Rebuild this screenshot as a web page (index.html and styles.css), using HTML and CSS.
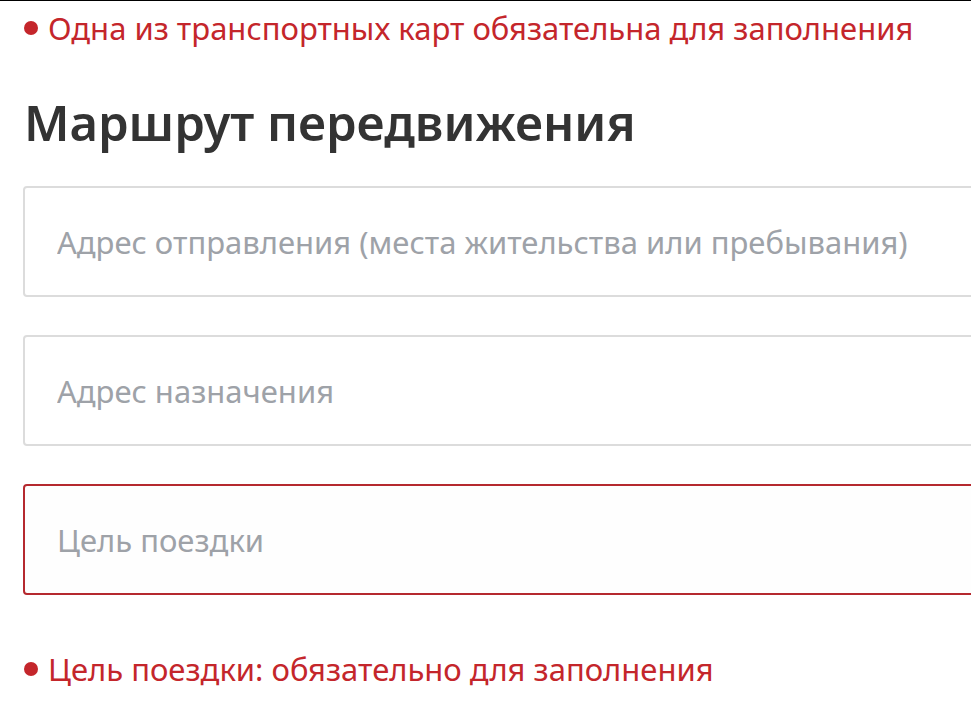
FILE: index.html
```html
<!DOCTYPE html>
<html lang="ru">
<head>
  <meta charset="UTF-8" />
  <meta name="viewport" content="width=device-width, initial-scale=1.0" />
  <title>Маршрут передвижения</title>
  <link rel="stylesheet" href="styles.css">
</head>
<body>
  <div class="page">
    <p class="error">Одна из транспортных карт обязательна для заполнения</p>

    <h2 class="title">Маршрут передвижения</h2>

    <div class="fields">
      <input class="field" type="text" placeholder="Адрес отправления (места жительства или пребывания)">
      <input class="field" type="text" placeholder="Адрес назначения">
      <input class="field invalid" type="text" placeholder="Цель поездки">
    </div>

    <p class="error">Цель поездки: обязательно для заполнения</p>
  </div>
</body>
</html>
```

FILE: styles.css
```css
* {
  margin: 0;
  padding: 0;
  box-sizing: border-box;
}

body {
  background: #fff;
  border-top: 1px solid #000;
  font-family: 'Noto Sans', sans-serif;
  overflow: hidden;
}

.page {
  padding: 7px 0 0 24px;
  overflow: hidden;
}

.error {
  display: flex;
  align-items: center;
  gap: 10px;
  color: #c4262b;
  font-size: 31px;
  line-height: 40px;
  white-space: nowrap;
}

.error::before {
  content: "";
  width: 14px;
  height: 14px;
  border-radius: 50%;
  background: #c4262b;
  flex-shrink: 0;
}

.title {
  margin-top: 44px;
  font-size: 49px;
  font-weight: 600;
  color: #333;
  line-height: 60px;
  white-space: nowrap;
}

.fields {
  margin-top: 34px;
  margin-left: -1px;
  margin-right: -60px;
  display: flex;
  flex-direction: column;
  gap: 38px;
}

.field {
  display: block;
  width: 100%;
  height: 111px;
  padding: 0 32px;
  border: 2px solid #dcdcdc;
  border-radius: 4px;
  background: #fff;
  font-family: inherit;
  font-size: 31px;
  color: #333;
  outline: none;
}

.field::placeholder {
  color: #9ea2a8;
}

.field.invalid {
  border-color: #b5292f;
  background: #fefefe;
}

.fields + .error {
  margin-top: 54px;
}
```
